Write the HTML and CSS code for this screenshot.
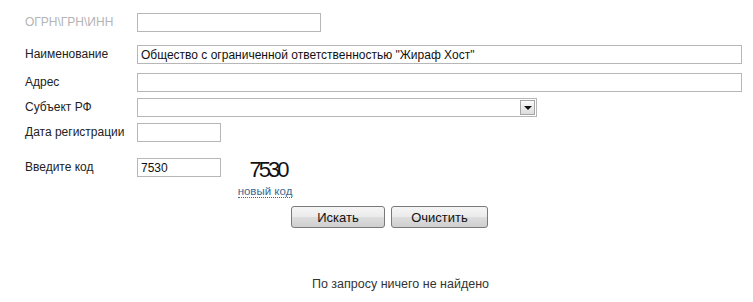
FILE: index.html
```html
<!DOCTYPE html>
<html lang="ru">
<head>
    <meta charset="UTF-8">
    <title>Поиск организации</title>
    <link rel="stylesheet" href="styles.css">
</head>
<body>

    <form class="search-form">
        <div class="row row-inn">
            <label class="label muted">ОГРН\ГРН\ИНН</label>
            <input class="field field-mid" type="text">
        </div>
        <div class="row row-name">
            <label class="label">Наименование</label>
            <input class="field field-wide" type="text" value='Общество с ограниченной ответственностью "Жираф Хост"'>
        </div>
        <div class="row row-addr">
            <label class="label">Адрес</label>
            <input class="field field-wide" type="text">
        </div>
        <div class="row row-region">
            <label class="label">Субъект РФ</label>
            <div class="select">
                <span class="select-value"></span>
                <span class="select-btn"><span class="arrow"></span></span>
            </div>
        </div>
        <div class="row row-date">
            <label class="label">Дата регистрации</label>
            <input class="field field-short" type="text">
        </div>
        <div class="row row-code">
            <label class="label">Введите код</label>
            <input class="field field-short" type="text" value="7530">
            <div class="captcha">
                <span class="captcha-img">7530</span>
                <a class="new-code" href="#">новый код</a>
            </div>
        </div>
        <div class="buttons">
            <button type="button" class="btn btn-search">Искать</button>
            <button type="button" class="btn btn-clear">Очистить</button>
        </div>
    </form>

    <p class="result">По запросу ничего не найдено</p>

</body>
</html>
```

FILE: styles.css
```css
body {
    margin: 0;
    font-family: "Liberation Sans", Arial, sans-serif;
    font-size: 12px;
    color: #222;
    background: #fff;
}
.search-form {
    padding: 13px 0 0 25px;
}
.row {
    display: flex;
    align-items: center;
    height: 19px;
}
.row-name {
    margin-top: 13px;
}
.row-addr {
    margin-top: 9px;
}
.row-region {
    margin-top: 6px;
}
.row-date {
    margin-top: 6px;
}
.row-code {
    height: auto;
    margin-top: 16px;
    align-items: flex-start;
}
.label {
    width: 112px;
    flex: none;
    line-height: 19px;
}
.label.muted {
    color: #b4b4b4;
}
.field {
    box-sizing: border-box;
    height: 19px;
    margin: 0;
    padding: 0 3px;
    border: 1px solid #b7b7b7;
    font-family: inherit;
    font-size: 12px;
    color: #111;
    background: #fff;
}
.field-mid {
    width: 184px;
}
.field-wide {
    width: 605px;
}
.field-short {
    width: 84px;
}
.select {
    box-sizing: border-box;
    width: 400px;
    height: 19px;
    border: 1px solid #b7b7b7;
    display: flex;
    justify-content: flex-end;
    padding: 1px;
}
.select-value {
    flex: 1;
}
.select-btn {
    box-sizing: border-box;
    width: 15px;
    height: 15px;
    border: 1px solid #a5a5a5;
    background: linear-gradient(#fbfbfb, #dcdcdc);
    display: flex;
    align-items: center;
    justify-content: center;
}
.arrow {
    width: 0;
    height: 0;
    border-left: 4px solid transparent;
    border-right: 4px solid transparent;
    border-top: 4px solid #111;
}
.captcha {
    margin-left: 17px;
    width: 54px;
    display: flex;
    flex-direction: column;
    align-items: center;
}
.captcha-img {
    margin-top: 1px;
    padding-left: 6px;
    font-family: "Liberation Sans Narrow", "Liberation Sans", sans-serif;
    font-size: 22px;
    line-height: 22px;
    letter-spacing: -3px;
    color: #111;
}
.new-code {
    margin-top: 4px;
    color: #3b6891;
    text-decoration: none;
    border-bottom: 1px dotted #3b6891;
    font-size: 11.5px;
    line-height: 12px;
    white-space: nowrap;
}
.buttons {
    display: flex;
    gap: 6px;
    margin: 8px 0 0 266px;
}
.btn {
    height: 22px;
    padding: 0;
    border: 1px solid #7a7a7a;
    border-radius: 3px;
    background: linear-gradient(#f5f5f5 0%, #ebebeb 50%, #dddddd 51%, #cfcfcf 100%);
    font-family: inherit;
    font-size: 13px;
    color: #111;
}
.btn-search {
    width: 94px;
}
.btn-clear {
    width: 97px;
}
.result {
    margin: 49px 0 0;
    padding-left: 48px;
    text-align: center;
    font-size: 12.5px;
    color: #333;
}
```
